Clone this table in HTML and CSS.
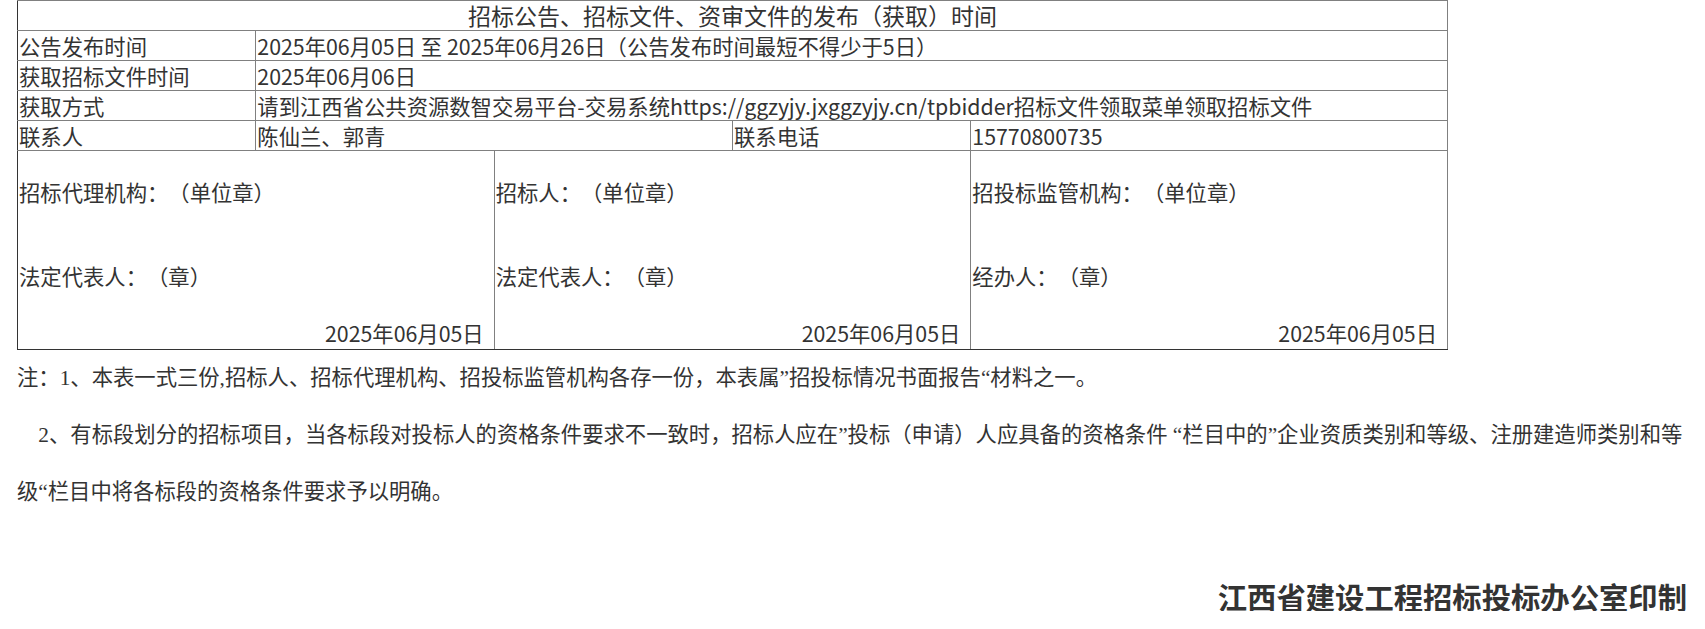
FILE: index.html
```html
<!DOCTYPE html>
<html lang="zh-CN">
<head>
<meta charset="utf-8">
<title>招标公告发布时间</title>
<link rel="stylesheet" href="styles.css">
</head>
<body>
<div class="page">
  <table class="info">
    <colgroup>
      <col class="c"><col class="c"><col class="c"><col class="c"><col class="c"><col class="c">
    </colgroup>
    <tr>
      <td colspan="6" class="title">招标公告、招标文件、资审文件的发布（获取）时间</td>
    </tr>
    <tr>
      <td>公告发布时间</td>
      <td colspan="5">2025年06月05日 至 2025年06月26日（公告发布时间最短不得少于5日）</td>
    </tr>
    <tr>
      <td>获取招标文件时间</td>
      <td colspan="5">2025年06月06日</td>
    </tr>
    <tr>
      <td>获取方式</td>
      <td colspan="5">请到江西省公共资源数智交易平台-交易系统https://ggzyjy.jxggzyjy.cn/tpbidder招标文件领取菜单领取招标文件</td>
    </tr>
    <tr>
      <td>联系人</td>
      <td colspan="2">陈仙兰、郭青</td>
      <td>联系电话</td>
      <td colspan="2">15770800735</td>
    </tr>
    <tr class="sign">
      <td colspan="2">
        <div class="s1">招标代理机构：（单位章）</div>
        <div class="s2">法定代表人：（章）</div>
        <div class="sdate">2025年06月05日</div>
      </td>
      <td colspan="2">
        <div class="s1">招标人：（单位章）</div>
        <div class="s2">法定代表人：（章）</div>
        <div class="sdate">2025年06月05日</div>
      </td>
      <td colspan="2">
        <div class="s1">招投标监管机构：（单位章）</div>
        <div class="s2">经办人：（章）</div>
        <div class="sdate">2025年06月05日</div>
      </td>
    </tr>
  </table>
  <p class="note">注：1、本表一式三份,招标人、招标代理机构、招投标监管机构各存一份，本表属”招投标情况书面报告“材料之一。</p>
  <p class="note">&nbsp;&nbsp;&nbsp;&nbsp;2、有标段划分的招标项目，当各标段对投标人的资格条件要求不一致时，招标人应在”投标（申请）人应具备的资格条件 “栏目中的”企业资质类别和等级、注册建造师类别和等级“栏目中将各标段的资格条件要求予以明确。</p>
  <p class="footer">江西省建设工程招标投标办公室印制</p>
</div>
</body>
</html>
```

FILE: styles.css
```css
html, body {
  margin: 0;
  padding: 0;
  background: #ffffff;
}

.page {
  padding: 0 18px 0 17px;
  color: #333333;
  text-spacing-trim: space-all;
}

.info {
  border-collapse: collapse;
  table-layout: fixed;
  width: 1431px;
  font-family: "Noto Sans CJK SC", sans-serif;
  font-size: 21.33px;
  line-height: 27px;
  color: #333333;
  text-spacing-trim: space-all;
}

.info .c {
  width: 16.6667%;
}

.info td {
  border: 1px solid #808080;
  padding: 1px;
  vertical-align: middle;
  white-space: nowrap;
}

.info tr > td:first-child {
  border-left-color: #333333;
}

.info tr:last-child > td {
  border-bottom-color: #333333;
}

.info .title {
  text-align: center;
  font-size: 23px;
}

.info .sign td {
  vertical-align: top;
  line-height: 29px;
  padding: 1px 1px 2px 1px;
}

.s1 {
  margin-top: 25px;
}

.s2 {
  margin-top: 55px;
}

.sdate {
  margin-top: 28px;
  text-align: right;
  padding-right: 9px;
}

.note {
  margin: 0;
  font-family: "Liberation Serif", "Noto Sans CJK SC", serif;
  font-size: 21.33px;
  line-height: 57px;
  color: #333333;
  text-spacing-trim: space-all;
}

.footer {
  margin: 60px 0 0 0;
  text-align: right;
  font-family: "Noto Sans CJK SC", sans-serif;
  font-weight: bold;
  font-size: 29.33px;
  line-height: 30px;
  color: #333333;
}
```
